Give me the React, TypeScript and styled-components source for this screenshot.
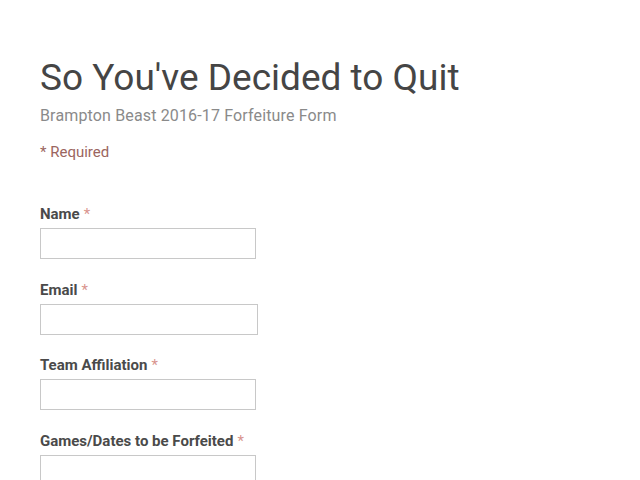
import React from "react";
import styled, { createGlobalStyle } from "styled-components";

const Global = createGlobalStyle`
  html, body { margin: 0; padding: 0; background: #fff; }
  body { font-family: Roboto, "Noto Sans", sans-serif; }
`;

const Page = styled.div`
  width: 640px;
  height: 480px;
  overflow: hidden;
  padding: 56px 0 0 40px;
  box-sizing: border-box;
  display: flex;
  flex-direction: column;
`;

const Title = styled.h1`
  margin: 0;
  font-family: Roboto, sans-serif;
  font-weight: 400;
  font-size: 37px;
  line-height: 44px;
  color: #454545;
`;

const Subtitle = styled.div`
  margin-top: 6px;
  font-size: 16px;
  line-height: 20px;
  letter-spacing: 0.15px;
  color: #8a8a8a;
`;

const Required = styled.div`
  margin-top: 16px;
  font-size: 15px;
  line-height: 20px;
  color: #9b6560;
`;

const Fields = styled.div`
  margin-top: 43px;
  display: flex;
  flex-direction: column;
  gap: 21.5px;
`;

const Field = styled.div`
  display: flex;
  flex-direction: column;
  gap: 5px;
`;

const Label = styled.label`
  font-size: 15px;
  font-weight: 700;
  line-height: 18px;
  color: #4a4a4a;
`;

const Star = styled.span`
  color: #d9948e;
  font-weight: 400;
  margin-left: 4px;
`;

const Input = styled.input<{ $w: number }>`
  width: ${(p) => p.$w}px;
  height: 31px;
  box-sizing: border-box;
  border: 1px solid #c8c8c8;
  background: #fff;
  padding: 0 8px;
  outline: none;
`;

const fields = [
  { label: "Name", w: 216 },
  { label: "Email", w: 218 },
  { label: "Team Affiliation", w: 216 },
  { label: "Games/Dates to be Forfeited", w: 216 },
];

export default function App() {
  return (
    <>
      <Global />
      <Page>
        <Title>So You've Decided to Quit</Title>
        <Subtitle>Brampton Beast 2016-17 Forfeiture Form</Subtitle>
        <Required>* Required</Required>
        <Fields>
          {fields.map((f) => (
            <Field key={f.label}>
              <Label>
                {f.label}
                <Star>*</Star>
              </Label>
              <Input $w={f.w} />
            </Field>
          ))}
        </Fields>
      </Page>
    </>
  );
}
